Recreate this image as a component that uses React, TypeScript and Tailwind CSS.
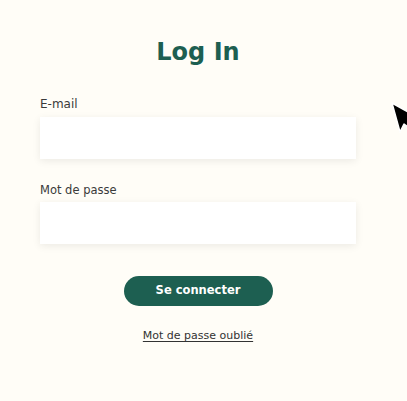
import React, { useState } from "react";

export default function App() {
  const [email, setEmail] = useState("");
  const [password, setPassword] = useState("");

  return (
    <div
      className="relative w-[407px] h-[401px] bg-[#fffdf7] overflow-hidden"
      style={{ fontFamily: "'DejaVu Sans', 'Liberation Sans', sans-serif" }}
    >
      <div className="flex flex-col w-[316px] ml-10 pt-[36px]">
        <h1 className="text-center text-[24px] leading-[32px] font-bold text-[#1d5f51]">
          Log In
        </h1>

        <label className="mt-[28px] text-[12px] leading-[16px] text-[#3a3a3a]">
          E-mail
        </label>
        <input
          value={email}
          onChange={(e) => setEmail(e.target.value)}
          type="email"
          className="mt-[5px] h-[42px] w-full bg-white shadow-[0_2px_8px_rgba(0,0,0,0.08)] outline-none px-3 text-sm"
        />

        <label className="mt-[23px] text-[11.5px] leading-[16px] text-[#3a3a3a]">
          Mot de passe
        </label>
        <input
          value={password}
          onChange={(e) => setPassword(e.target.value)}
          type="password"
          className="mt-[4px] h-[42px] w-full bg-white shadow-[0_2px_8px_rgba(0,0,0,0.08)] outline-none px-3 text-sm"
        />

        <div className="flex flex-col items-center mt-[32px]">
          <button className="w-[149px] h-[30px] rounded-full bg-[#1d5f51] text-white text-[11.5px] font-bold">
            Se connecter
          </button>
          <a
            href="#"
            className="mt-[23px] text-[11px] leading-[14px] text-[#333] underline underline-offset-2"
          >
            Mot de passe oublié
          </a>
        </div>
      </div>

      {/* mouse pointer */}
      <svg
        className="absolute left-[389px] top-[101px]"
        width="26"
        height="36"
        viewBox="0 0 26 36"
      >
        <path
          d="M3 2 L11 31 L15 23 L23 29 L26 25 L19 19 L26 15 Z"
          fill="#000"
          stroke="#fff"
          strokeWidth="1.5"
          strokeLinejoin="round"
        />
      </svg>
    </div>
  );
}
